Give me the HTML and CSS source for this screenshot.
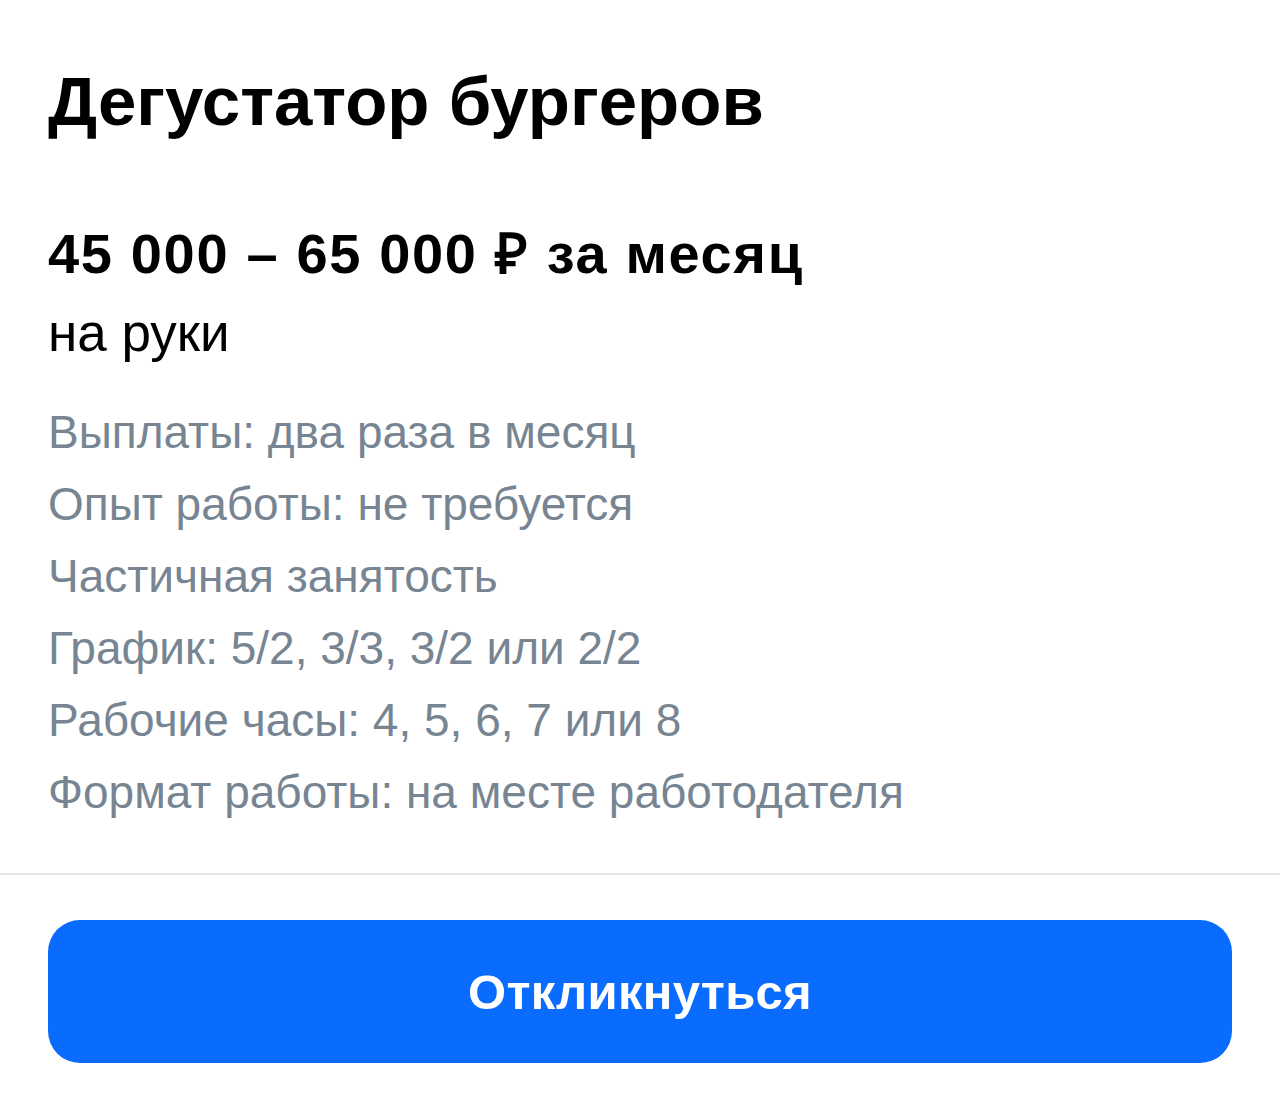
FILE: index.html
```html
<!DOCTYPE html>
<html lang="ru">
<head>
<meta charset="utf-8">
<title>Дегустатор бургеров</title>
<link rel="stylesheet" href="styles.css">
</head>
<body>
<main class="vacancy">
  <section class="vacancy__info">
    <h1 class="vacancy__title">Дегустатор бургеров</h1>
    <p class="vacancy__salary">45 000 – 65 000 ₽ за месяц</p>
    <p class="vacancy__net">на руки</p>
    <ul class="vacancy__terms">
      <li>Выплаты: два раза в месяц</li>
      <li>Опыт работы: не требуется</li>
      <li>Частичная занятость</li>
      <li>График: 5/2, 3/3, 3/2 или 2/2</li>
      <li>Рабочие часы: 4, 5, 6, 7 или 8</li>
      <li>Формат работы: на месте работодателя</li>
    </ul>
  </section>
  <div class="vacancy__actions">
    <button class="btn-respond" type="button">Откликнуться</button>
  </div>
</main>
</body>
</html>
```
FILE: styles.css
```css
* { box-sizing: border-box; }

html, body {
  margin: 0;
  background: #ffffff;
}

body {
  font-family: "Liberation Sans", Arial, sans-serif;
  color: #000000;
}

.vacancy__info {
  padding: 62px 48px 45px;
  border-bottom: 2px solid #e2e5e9;
}

.vacancy__title {
  margin: 0;
  font-size: 69px;
  line-height: 80px;
  font-weight: 700;
}

.vacancy__salary {
  margin: 80px 0 0;
  font-size: 56px;
  line-height: 64px;
  font-weight: 700;
  letter-spacing: 1.65px;
}

.vacancy__net {
  margin: 15px 0 0;
  font-size: 53px;
  line-height: 64px;
}

.vacancy__terms {
  list-style: none;
  margin: 31px 0 0;
  padding: 0;
  color: #778593;
  font-size: 46px;
  line-height: 72px;
}

.vacancy__actions {
  padding: 45px 48px 48px;
}

.btn-respond {
  display: block;
  width: 100%;
  height: 143px;
  border: 0;
  border-radius: 32px;
  background: #0a6cff;
  color: #ffffff;
  font-family: inherit;
  font-size: 49px;
  font-weight: 700;
  letter-spacing: 0.3px;
  cursor: pointer;
}
```
